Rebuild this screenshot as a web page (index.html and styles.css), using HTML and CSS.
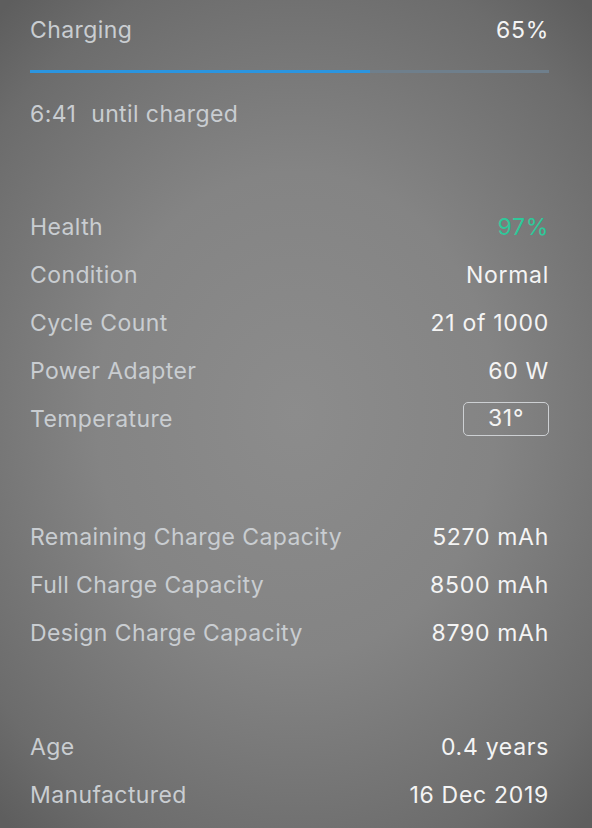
FILE: index.html
```html
<!DOCTYPE html>
<html lang="en">
<head>
  <meta charset="utf-8">
  <meta name="viewport" content="width=device-width, initial-scale=1">
  <title>Battery</title>
  <link rel="stylesheet" href="styles.css">
</head>
<body>
  <div class="panel">
    <section class="charge">
      <div class="row">
        <span class="label">Charging</span>
        <span class="value">65%</span>
      </div>
      <div class="bar"><div class="bar-fill" style="width: 65.5%"></div></div>
      <div class="eta"><span>6:41</span> until charged</div>
    </section>

    <section class="group status">
      <div class="row">
        <span class="label">Health</span>
        <span class="value good">97%</span>
      </div>
      <div class="row">
        <span class="label">Condition</span>
        <span class="value">Normal</span>
      </div>
      <div class="row">
        <span class="label">Cycle Count</span>
        <span class="value">21 of 1000</span>
      </div>
      <div class="row">
        <span class="label">Power Adapter</span>
        <span class="value">60 W</span>
      </div>
      <div class="row">
        <span class="label">Temperature</span>
        <span class="value temp">31°</span>
      </div>
    </section>

    <section class="group">
      <div class="row">
        <span class="label">Remaining Charge Capacity</span>
        <span class="value">5270 mAh</span>
      </div>
      <div class="row">
        <span class="label">Full Charge Capacity</span>
        <span class="value">8500 mAh</span>
      </div>
      <div class="row">
        <span class="label">Design Charge Capacity</span>
        <span class="value">8790 mAh</span>
      </div>
    </section>

    <section class="group">
      <div class="row">
        <span class="label">Age</span>
        <span class="value">0.4 years</span>
      </div>
      <div class="row">
        <span class="label">Manufactured</span>
        <span class="value">16 Dec 2019</span>
      </div>
    </section>
  </div>
</body>
</html>
```

FILE: styles.css
```css
html, body {
  margin: 0;
  height: 100%;
}
body {
  font-family: Inter, "Noto Sans", sans-serif;
  font-size: 23px;
  letter-spacing: 0.4px;
  background: radial-gradient(ellipse 75% 65% at 50% 50%, #8c8c8c 0%, #848484 45%, #6c6c6c 85%, #5e5e5e 100%);
  color: #f2f2f2;
  overflow: hidden;
}
.panel {
  padding: 6px 43px 0 30px;
}
.row {
  display: flex;
  justify-content: space-between;
  align-items: center;
  height: 48px;
}
.label {
  color: #c9cdd1;
}
.value {
  color: #f4f4f4;
  letter-spacing: 0.7px;
}
.good {
  color: #2fc89a;
}
.temp {
  box-sizing: border-box;
  width: 86px;
  height: 34px;
  border: 1.5px solid #cdd0d3;
  border-radius: 5px;
  text-align: center;
  line-height: 31px;
}
.bar {
  height: 3px;
  margin-top: 16px;
  background: #6f7f8c;
}
.bar-fill {
  height: 100%;
  background: #2b95e0;
}
.eta {
  color: #c9cdd1;
  height: 48px;
  line-height: 48px;
  margin-top: 17px;
}
.eta span {
  margin-right: 8px;
}
.charge {
  margin-bottom: 65px;
}
.group {
  margin-bottom: 66px;
}
.status {
  margin-bottom: 70px;
}
```
